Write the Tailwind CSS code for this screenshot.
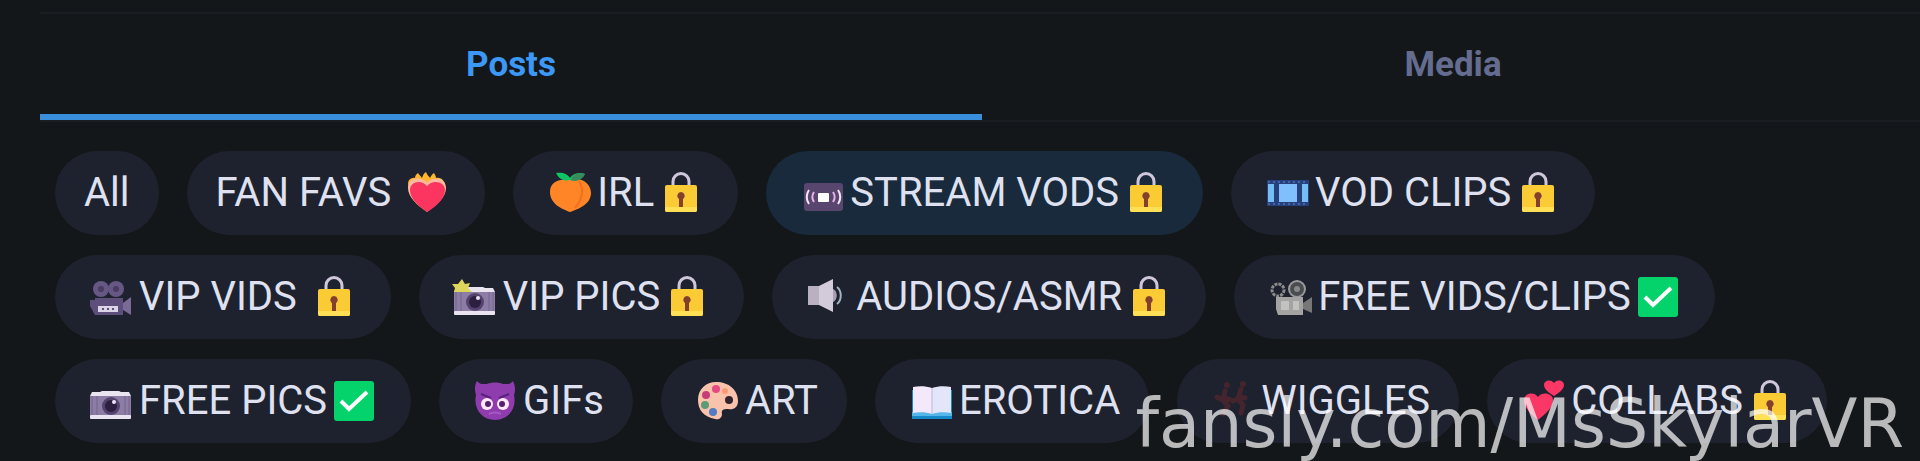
<!DOCTYPE html>
<html lang="en">
<head>
    <meta charset="UTF-8">
    <meta name="viewport" content="width=device-width, initial-scale=1.0">
    <title>Posts</title>
    <script src="https://cdn.jsdelivr.net/npm/@tailwindcss/browser@4"></script>
</head>
<body class="bg-[#141719] font-['Roboto',sans-serif] overflow-hidden">
    <!-- Shared icons -->
    <svg class="hidden" aria-hidden="true">
        <symbol id="lock" viewBox="0 0 53 42">
            <path d="M18 16V9.500a8 8 0 0 1 16 0V16" fill="none" stroke="#cfc6dc" stroke-width="3"/>
            <rect x="10" y="13" width="32" height="27" rx="2" fill="#fbcb35"/>
            <path d="M10 35h32v3a2 2 0 0 1-2 2H12a2 2 0 0 1-2-2z" fill="#ffdf55"/>
            <path d="M26 20a4 4 0 0 1 2 7.300V35h-4v-7.700a4 4 0 0 1 2-7.300z" fill="#83402d"/>
        </symbol>
        <symbol id="check" viewBox="0 0 53 42">
            <rect x="6" y="1" width="40" height="40" rx="3" fill="#04d36b"/>
            <path d="M13 21l8 8L39 12" fill="none" stroke="#fff" stroke-width="4"/>
        </symbol>
        <symbol id="camera" viewBox="0 0 53 42">
            <path d="M5 16l2-4h8l2-1h17l2 1h8l2 4z" fill="#e9e4f0"/>
            <rect x="5" y="16" width="41" height="20" fill="#8c7da5"/>
            <path d="M7 16v20M12 16v20M40 16v20M44 16v20" stroke="#74658e" stroke-width="1"/>
            <rect x="5" y="35" width="41" height="4" rx="1" fill="#e9e4f0"/>
            <circle cx="26" cy="26" r="9" fill="#55426e"/>
            <circle cx="26" cy="26" r="6" fill="#2c1f40"/>
            <circle cx="29" cy="22" r="2" fill="#ece4f8"/>
        </symbol>
    </svg>

    <!-- Tabs -->
    <nav class="flex ml-10 -mr-1 mt-3 border-y-2 border-[#1a1e22]">
        <button class="flex-1 h-[106px] border-b-6 border-[#3a8fdc] text-[35px] leading-none font-bold text-[#3d97f5]">Posts</button>
        <button class="flex-1 h-[106px] border-b-6 border-transparent text-[35px] leading-none font-bold text-[#646c90]">Media</button>
    </nav>

    <!-- Category filters -->
    <div class="flex flex-wrap gap-x-7 gap-y-5 pl-[55px] pt-[29px] text-[40px] leading-none text-[#dfe1f0]">
        <button class="flex items-center whitespace-pre h-[84px] px-[29px] rounded-full bg-[#1e222e]">All</button>
        <button class="flex items-center whitespace-pre h-[84px] px-[29px] rounded-full bg-[#1e222e]"><span>FAN FAVS </span><svg class="w-[55px] h-[42px]" viewBox="0 0 53 42">
            <path d="M7 15C4 9 9 5 13 6c0-3 2-4 3-5 1 2 3 3 4 5 1-3 2-5 4-6 1 3 3 4 4 6 1-2 2-4 4-5 1 2 2 3 2 5 6-1 10 4 9 11-1 9-8 16-18 23C15 33 7 26 7 15z" fill="#ffb52e"/>
            <path d="M25 39C15 33 6 25 6 16c0-8 7-11 13-9 3 1 5 2 6 4 1-2 3-3 6-4 6-2 13 1 13 9 0 9-9 17-19 23z" fill="#ffb9a0"/>
            <path d="M25 40C15 33 8 26 8 18c0-8 11-11 17-4 6-7 18-4 18 4 0 8-8 16-18 22z" fill="#fb3560"/>
        </svg></button>
        <button class="flex items-center whitespace-pre h-[84px] px-[29px] rounded-full bg-[#1e222e]"><svg class="w-[55px] h-[42px]" viewBox="0 0 53 42">
            <path d="M27 40C19 37 7 32 7 20 7 11 15 7 23 8c3 0 5 0 8-1 9-1 17 5 17 14 0 11-12 16-21 19z" fill="#ff8526"/>
            <path d="M36 9c5 8 4 18-4 27" fill="none" stroke="#f2701f" stroke-width="2"/>
            <path d="M27 8c-4 1-10 1-14-7 6-1 11 0 14 5 3-5 10-6 15-4-3 6-9 8-15 6z" fill="#0fc463"/>
            <path d="M28 8c1-5 8-8 14-6-3 6-9 8-14 6z" fill="#3b8a5c"/>
        </svg><span>IRL</span><svg class="w-[55px] h-[42px]"><use href="#lock"/></svg></button>
        <button class="flex items-center whitespace-pre h-[84px] px-[29px] rounded-full bg-[#182a3b]"><svg class="w-[55px] h-[42px]" viewBox="0 0 53 42">
            <rect x="8" y="11" width="39" height="28" rx="3" fill="#58466f"/>
            <rect x="22" y="21" width="11" height="9" rx="1" fill="#fff"/>
            <path d="M18 20c-2 3-2 7 0 10M37 20c2 3 2 7 0 10" fill="none" stroke="#e5b3e4" stroke-width="2"/>
            <path d="M13 18c-3 4-3 10 0 14M42 18c3 4 3 10 0 14" fill="none" stroke="#f4e8f7" stroke-width="2"/>
        </svg><span>STREAM VODS</span><svg class="w-[55px] h-[42px]"><use href="#lock"/></svg></button>
        <button class="flex items-center whitespace-pre h-[84px] px-[29px] rounded-full bg-[#1e222e]"><svg class="w-[55px] h-[42px]" viewBox="0 0 53 42">
            <rect x="6" y="8" width="42" height="26" rx="1" fill="#27407c"/>
            <rect x="7" y="12" width="6" height="18" fill="#75bdf5"/>
            <rect x="18" y="12" width="18" height="18" fill="#80bffb"/>
            <rect x="41" y="12" width="6" height="18" fill="#75bdf5"/>
            <path d="M7 10h40M7 32h40" stroke="#3f66ab" stroke-width="2" stroke-dasharray="2 3"/>
        </svg><span>VOD CLIPS</span><svg class="w-[55px] h-[42px]"><use href="#lock"/></svg></button>

        <button class="flex items-center whitespace-pre h-[84px] px-[29px] rounded-full bg-[#1e222e]"><svg class="w-[55px] h-[42px]" viewBox="0 0 53 42">
            <circle cx="16" cy="13" r="8" fill="#675784"/>
            <circle cx="31" cy="13" r="8" fill="#675784"/>
            <circle cx="16" cy="13" r="3" fill="#493b62"/>
            <circle cx="31" cy="13" r="3" fill="#493b62"/>
            <path d="M10 22h28v17H10l-5-9V24h5z" fill="#5e4e7b"/>
            <path d="M38 27l8-6v18l-8-5z" fill="#7a6b96"/>
            <rect x="13" y="30" width="20" height="6" fill="#dcd5e6"/>
            <path d="M17 33h2M22 33h2M27 33h2" stroke="#5e4e7b" stroke-width="2"/>
        </svg><span>VIP VIDS </span><svg class="w-[55px] h-[42px]"><use href="#lock"/></svg></button>
        <button class="flex items-center whitespace-pre h-[84px] px-[29px] rounded-full bg-[#1e222e]"><svg class="w-[55px] h-[42px]" viewBox="0 0 53 42">
            <use href="#camera" width="53" height="42"/>
            <path d="M13 3l3 5 5-1-2 5 4 4H5l1-4-3-4 6 0z" fill="#ddd55c"/>
        </svg><span>VIP PICS</span><svg class="w-[55px] h-[42px]"><use href="#lock"/></svg></button>
        <button class="flex items-center whitespace-pre h-[84px] px-[29px] rounded-full bg-[#1e222e]"><svg class="w-[55px] h-[42px]" viewBox="0 0 53 42">
            <path d="M6 10h12v19H6z" fill="#b9b1c2"/>
            <path d="M17 10L31 3v33l-14-7z" fill="#d3cbd9"/>
            <path d="M31 13c5 2 5 11 0 13" fill="#a79eb3"/>
            <path d="M35 11c5 4 5 13 0 17" fill="none" stroke="#a1b4c0" stroke-width="2"/>
        </svg><span>AUDIOS/ASMR</span><svg class="w-[55px] h-[42px]"><use href="#lock"/></svg></button>
        <button class="flex items-center whitespace-pre h-[84px] px-[29px] rounded-full bg-[#1e222e]"><svg class="w-[55px] h-[42px]" viewBox="0 0 53 42">
            <circle cx="14" cy="14" r="6" fill="none" stroke="#8b8b8b" stroke-width="3" stroke-dasharray="3 1"/>
            <circle cx="33" cy="13" r="8" fill="#4a4d50" stroke="#999" stroke-width="2"/>
            <circle cx="33" cy="13" r="3" fill="#888"/>
            <path d="M12 21h27v18H14l-2-6z" fill="#a3a3a1"/>
            <path d="M39 27l9-6v16l-9-4z" fill="#777"/>
            <path d="M17 25h8v9h-8zM29 25h6v9h-6z" fill="#c2c2c0"/>
        </svg><span>FREE VIDS/CLIPS</span><svg class="w-[55px] h-[42px]"><use href="#check"/></svg></button>

        <button class="flex items-center whitespace-pre h-[84px] px-[29px] rounded-full bg-[#1e222e]"><svg class="w-[55px] h-[42px]"><use href="#camera"/></svg><span>FREE PICS</span><svg class="w-[55px] h-[42px]"><use href="#check"/></svg></button>
        <button class="flex items-center whitespace-pre h-[84px] px-[29px] rounded-full bg-[#1e222e]"><svg class="w-[55px] h-[42px]" viewBox="0 0 53 42">
            <path d="M8 1c3 4 6 3 10 3 5-2 11-2 16 0 4 0 7 1 10-3 3 6 2 11 1 14 3 14-6 25-19 25S4 29 7 15C6 11 5 6 8 1z" fill="#8e3cae"/>
            <path d="M12 14l10 4M40 14l-10 4" stroke="#5c1f7d" stroke-width="2"/>
            <circle cx="18" cy="24" r="6" fill="#ffe9f7"/>
            <circle cx="34" cy="24" r="6" fill="#ffe9f7"/>
            <circle cx="19" cy="24" r="3" fill="#55206f"/>
            <circle cx="33" cy="24" r="3" fill="#55206f"/>
            <path d="M20 34c4-2 8-2 12 0" fill="none" stroke="#a65bc2" stroke-width="2"/>
        </svg><span>GIFs</span></button>
        <button class="flex items-center whitespace-pre h-[84px] px-[29px] rounded-full bg-[#1e222e]"><svg class="w-[55px] h-[42px]" viewBox="0 0 53 42">
            <path d="M25 2c13 0 22 8 22 19 0 7-5 9-10 8-5 0-7 1-6 5 0 4-3 6-7 5C13 37 7 30 7 20 7 9 15 2 25 2z" fill="#f8c2ab"/>
            <circle cx="38" cy="20" r="4" fill="#34232f"/>
            <circle cx="25" cy="9" r="4" fill="#e64a82"/>
            <circle cx="15" cy="15" r="4" fill="#c73d78"/>
            <circle cx="14" cy="25" r="4" fill="#5d9b78"/>
            <circle cx="22" cy="32" r="4" fill="#547bc5"/>
            <circle cx="34" cy="11" r="3" fill="#ff9a72"/>
        </svg><span>ART</span></button>
        <button class="flex items-center whitespace-pre h-[84px] px-[29px] rounded-full bg-[#1e222e]"><svg class="w-[55px] h-[42px]" viewBox="0 0 53 42">
            <path d="M7 10h40v29H7z" fill="#1689cb"/>
            <path d="M7 32h40v4H7z" fill="#55b6e8"/>
            <path d="M8 7c6-1 13-1 19 1v26c-6-2-13-2-19-1z" fill="#f3e9fa"/>
            <path d="M46 7c-6-1-13-1-19 1v26c6-2 13-2 19-1z" fill="#e2e6f8"/>
            <path d="M27 8v26" stroke="#bbb8dc" stroke-width="1"/>
        </svg><span>EROTICA</span></button>
        <button class="flex items-center whitespace-pre h-[84px] px-[29px] rounded-full bg-[#1e222e]"><svg class="w-[55px] h-[42px]" viewBox="0 0 53 42">
            <g fill="none" stroke="#44252d" stroke-width="5" stroke-linecap="round">
                <path d="M18 11l-2 9 5 6-5 8M16 20l-6-3M17 18l7 2"/>
                <path d="M34 9l-3 10 5 6-2 8M32 18l-6 3M32 17l6 1"/>
            </g>
            <circle cx="20" cy="5" r="3" fill="#44252d"/>
            <circle cx="36" cy="4" r="3" fill="#44252d"/>
        </svg><span>WIGGLES</span></button>
        <button class="flex items-center whitespace-pre h-[84px] px-[29px] rounded-full bg-[#1e222e]"><svg class="w-[55px] h-[42px]" viewBox="0 0 53 42">
            <path d="M21 40C14 34 7 28 7 20c0-7 10-9 14-3 4-6 15-4 15 3 0 8-8 14-15 20z" fill="#fb3765"/>
            <path d="M37 16c-5-3-10-7-10-11 0-5 7-6 10-2 3-4 10-3 10 2 0 4-5 8-10 11z" fill="#fb3765"/>
        </svg><span>COLLABS</span><svg class="w-[55px] h-[42px]"><use href="#lock"/></svg></button>
    </div>

    <!-- Watermark over the last row -->
    <p class="fixed right-4 bottom-[3px] font-['DejaVu_Sans',sans-serif] text-[67px] leading-none text-white/70 pointer-events-none">fansly.com/MsSkylarVR</p>
</body>
</html>
